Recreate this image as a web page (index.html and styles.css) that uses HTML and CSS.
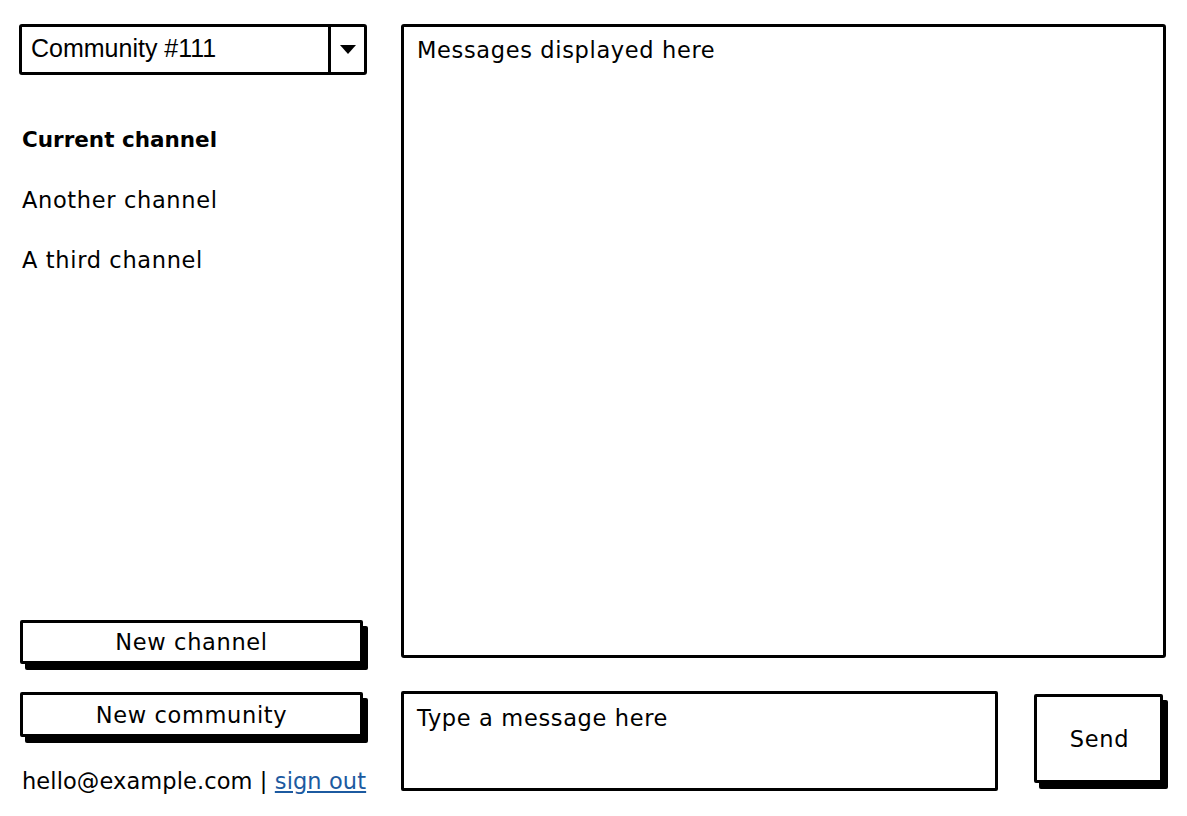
FILE: index.html
```html
<!DOCTYPE html>
<html lang="en">
<head>
    <meta charset="UTF-8">
    <meta name="viewport" content="width=device-width, initial-scale=1.0">
    <title>Chat Wireframe</title>
    <link rel="stylesheet" href="styles.css">
</head>
<body>

    <div class="app">
        <aside class="sidebar">
            <div class="community-select">
                <span class="community-name">Community #111</span>
                <span class="select-arrow">
                    <svg width="16" height="9" viewBox="0 0 16 9"><path d="M0 0 L16 0 L8 9 Z" fill="#000"/></svg>
                </span>
            </div>

            <ul class="channels">
                <li class="current">Current channel</li>
                <li>Another channel</li>
                <li>A third channel</li>
            </ul>

            <button class="sketch-btn new-channel">New channel</button>
            <button class="sketch-btn new-community">New community</button>

            <p class="account">hello@example.com | <a href="#">sign out</a></p>
        </aside>

        <main class="chat">
            <div class="messages">Messages displayed here</div>

            <form class="composer">
                <div class="message-input">Type a message here</div>
                <button type="submit" class="sketch-btn send">Send</button>
            </form>
        </main>
    </div>

</body>
</html>
```

FILE: styles.css
```css
body {
    margin: 0;
    font-family: 'DejaVu Sans', 'Open Sans', sans-serif;
    font-size: 22.5px;
    letter-spacing: 0.65px;
    background-color: #fff;
    color: #000;
}

.app {
    display: flex;
    gap: 34px;
    height: 816px;
    box-sizing: border-box;
    padding: 24px 21px 25px 19px;
}

/* left column */
.sidebar {
    width: 348px;
    display: flex;
    flex-direction: column;
}

.community-select {
    display: flex;
    height: 51px;
    box-sizing: border-box;
    border: 3px solid #000;
    border-radius: 3px;
}

.community-name {
    flex: 1;
    padding-left: 9px;
    font-family: 'Liberation Sans', Arial, sans-serif;
    font-size: 25px;
    letter-spacing: 0;
    line-height: 43px;
}

.select-arrow {
    width: 33px;
    border-left: 3px solid #000;
    display: flex;
    align-items: center;
    justify-content: center;
}

.channels {
    list-style: none;
    margin: 49px 0 0;
    padding: 0 0 0 3px;
}

.channels li {
    height: 60px;
    line-height: 32px;
}

.channels .current {
    font-weight: bold;
    font-size: 21.5px;
    letter-spacing: 0;
}

.sketch-btn {
    font-family: 'DejaVu Sans', 'Open Sans', sans-serif;
    font-size: 22.5px;
    letter-spacing: 0.65px;
    color: #000;
    background-color: #fff;
    border: 3px solid #000;
    border-radius: 2px;
    box-shadow: 5px 6px 0 #000;
    cursor: pointer;
}

.new-channel {
    margin-top: auto;
    width: 343px;
    height: 44px;
    margin-left: 1px;
    padding: 0 0 1px;
}

.new-community {
    margin-top: 28px;
    width: 343px;
    height: 45px;
    margin-left: 1px;
    padding: 0;
}

.account {
    margin: 28px -10px -6px 3px;
    line-height: 32px;
    letter-spacing: 0.1px;
    white-space: nowrap;
}

.account a {
    color: #1c5aa0;
}

/* right column */
.chat {
    flex: 1;
    display: flex;
    flex-direction: column;
    gap: 33px;
}

.messages {
    flex: 1;
    border: 3px solid #000;
    border-radius: 3px;
    padding: 10px 13px;
}

.composer {
    display: flex;
    gap: 36px;
    height: 100px;
    margin: 0;
}

.message-input {
    width: 597px;
    box-sizing: border-box;
    border: 3px solid #000;
    border-radius: 2px;
    padding: 11px 13px;
}

.send {
    width: 129px;
    height: 89px;
    margin-top: 3px;
    padding: 0 0 0 2px;
}
```
